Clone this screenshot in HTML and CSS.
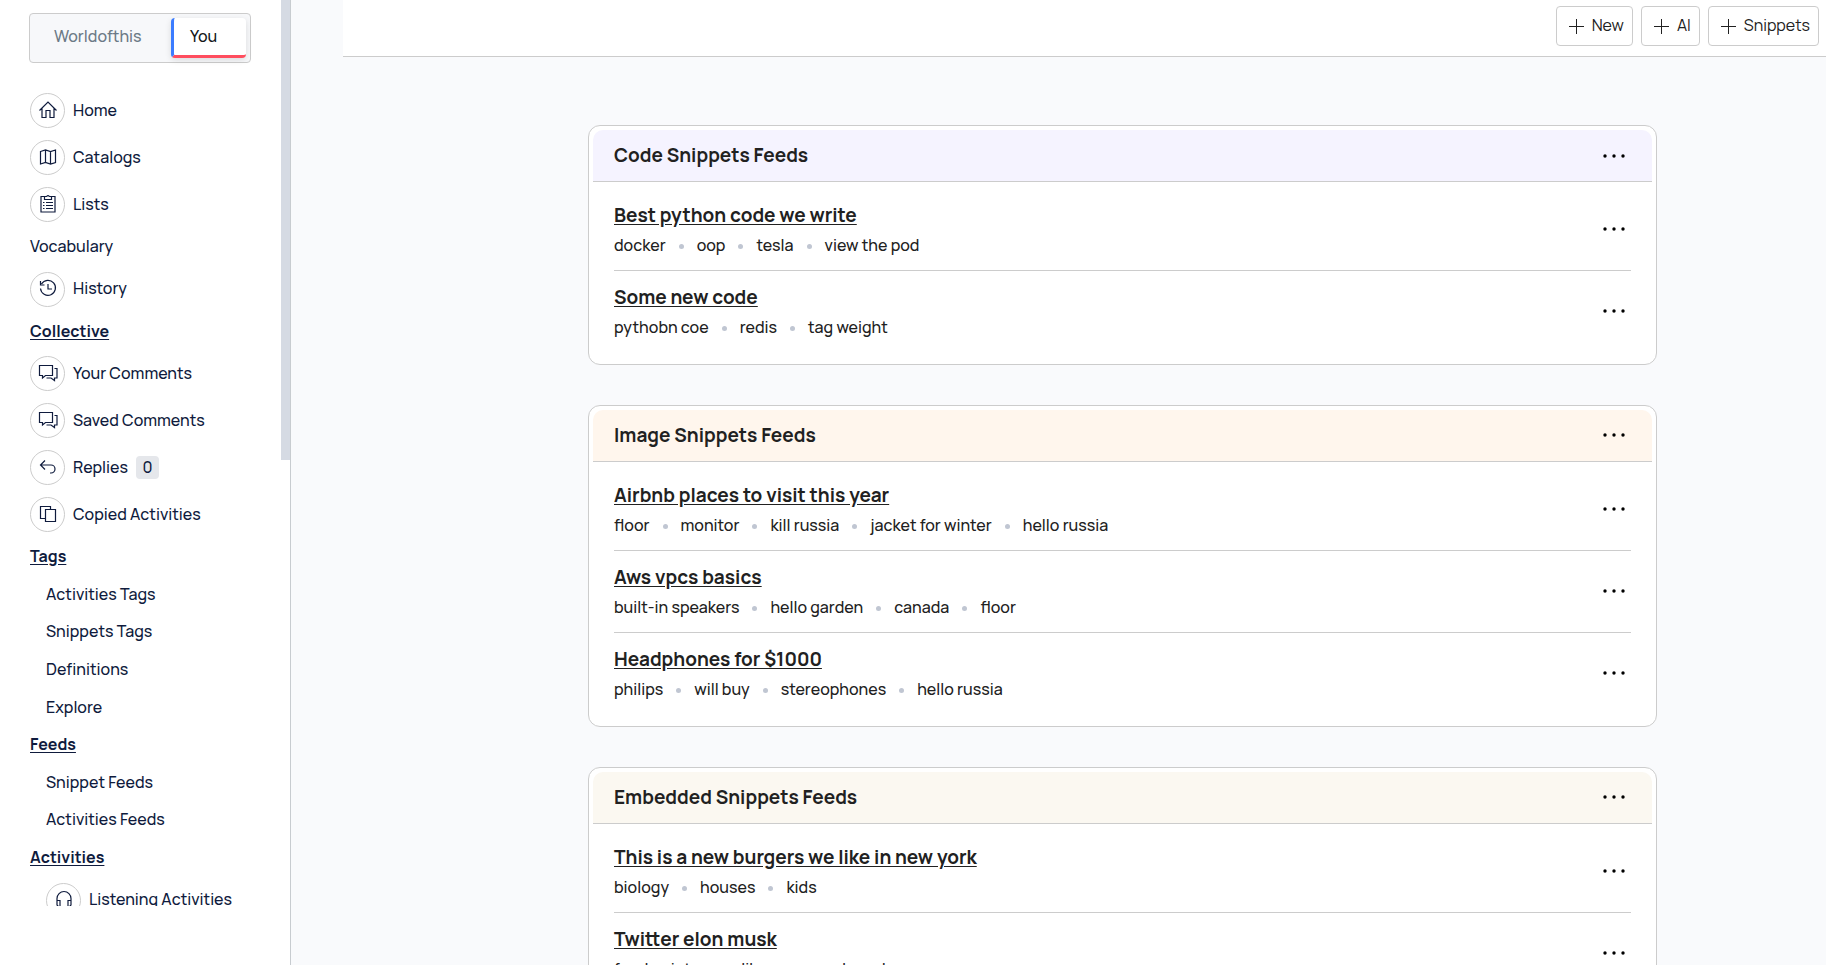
FILE: index.html
```html
<!DOCTYPE html>
<html lang="en">

<head>
    <meta charset="UTF-8">
    <meta name="viewport" content="width=device-width, initial-scale=1.0">
    <title>Snippet Feeds</title>
    <link rel="stylesheet" href="styles.css">
</head>

<body>
    <!-- shared icons -->
    <svg class="icon-defs" width="0" height="0" aria-hidden="true">
        <symbol id="icon-home" viewBox="0 0 18 18">
            <path d="M.5 9.5 9 1l8.500 8.500M3 7.500v9h4v-7h4v7h4v-9" />
        </symbol>
        <symbol id="icon-map" viewBox="0 0 18 18">
            <path d="M1.500 3.500 6.500 2l5 1.500 5-1.500v12.500l-5 1.500-5-1.500-5 1.500zM6.500 2v12.500M11.500 3.500V16" />
        </symbol>
        <symbol id="icon-list" viewBox="0 0 18 18">
            <path d="M5.500 1.500H2v15.500h14V1.500h-3.500M5.500 1.500h2L9 .500l1.500 1h2v3h-7zM4 7.500h1.500M7 7.500h7M4 10.500h1.500M7 10.500h7M4 13.500h1.500M7 13.500h7" />
        </symbol>
        <symbol id="icon-history" viewBox="0 0 18 18">
            <path d="M2.500 5A7.500 7.500 0 1 1 1.500 9.500M1.500 2v4h4M9 5v5h4" />
        </symbol>
        <symbol id="icon-comments" viewBox="0 0 20 18">
            <path d="M1.500 1.500h13v10H7.500L4.500 14v-2.500h-3zM16.500 4.500h2.500v9.500H16.500v2.500L13 14H8.500" />
        </symbol>
        <symbol id="icon-reply" viewBox="0 0 18 18">
            <path d="M6 2.500 1.500 7 6 11.500M1.500 7H12a4 4 0 0 1 0 8h-1" />
        </symbol>
        <symbol id="icon-copy" viewBox="0 0 18 18">
            <path d="M6 13.500H1.500v-12h10V4M6.500 4.500h10v12h-10z" />
        </symbol>
        <symbol id="icon-headphones" viewBox="0 0 18 18">
            <path d="M2 12V8.500a7 7 0 0 1 14 0V12M2 10.500h3v6H3.500L2 15zM16 10.500h-3v6h1.500L16 15z" />
        </symbol>
        <symbol id="icon-plus" viewBox="0 0 15 15">
            <path d="M7.500 0v15M0 7.500h15" />
        </symbol>
        <symbol id="icon-dots" viewBox="0 0 22 4">
            <circle cx="2" cy="2" r="1.700" />
            <circle cx="11" cy="2" r="1.700" />
            <circle cx="20" cy="2" r="1.700" />
        </symbol>
    </svg>

    <aside class="sidebar">
        <div class="sidebar-scroll">
            <div class="switcher">
                <button type="button" class="switch-btn">Worldofthis</button>
                <button type="button" class="switch-btn active">You</button>
            </div>

            <nav class="menu">
                <a href="#" class="menu-item"><span class="circle"><svg class="icon"><use href="#icon-home" /></svg></span>Home</a>
                <a href="#" class="menu-item"><span class="circle"><svg class="icon"><use href="#icon-map" /></svg></span>Catalogs</a>
                <a href="#" class="menu-item"><span class="circle"><svg class="icon"><use href="#icon-list" /></svg></span>Lists</a>
                <a href="#" class="menu-item">Vocabulary</a>
                <a href="#" class="menu-item"><span class="circle"><svg class="icon"><use href="#icon-history" /></svg></span>History</a>
                <a href="#" class="menu-item heading">Collective</a>
                <a href="#" class="menu-item"><span class="circle"><svg class="icon wide"><use href="#icon-comments" /></svg></span>Your Comments</a>
                <a href="#" class="menu-item"><span class="circle"><svg class="icon wide"><use href="#icon-comments" /></svg></span>Saved Comments</a>
                <a href="#" class="menu-item"><span class="circle"><svg class="icon"><use href="#icon-reply" /></svg></span>Replies <span class="count">0</span></a>
                <a href="#" class="menu-item"><span class="circle"><svg class="icon"><use href="#icon-copy" /></svg></span>Copied Activities</a>
                <a href="#" class="menu-item heading">Tags</a>
                <a href="#" class="menu-item sub">Activities Tags</a>
                <a href="#" class="menu-item sub">Snippets Tags</a>
                <a href="#" class="menu-item sub">Definitions</a>
                <a href="#" class="menu-item sub">Explore</a>
                <a href="#" class="menu-item heading">Feeds</a>
                <a href="#" class="menu-item sub">Snippet Feeds</a>
                <a href="#" class="menu-item sub">Activities Feeds</a>
                <a href="#" class="menu-item heading">Activities</a>
                <a href="#" class="menu-item sub"><span class="circle"><svg class="icon"><use href="#icon-headphones" /></svg></span>Listening Activities</a>
            </nav>
        </div>
        <div class="scroll-thumb"></div>
    </aside>

    <div class="page">
        <header class="topbar">
            <button type="button" class="add-btn"><svg class="plus"><use href="#icon-plus" /></svg>New</button>
            <button type="button" class="add-btn"><svg class="plus"><use href="#icon-plus" /></svg>AI</button>
            <button type="button" class="add-btn"><svg class="plus"><use href="#icon-plus" /></svg>Snippets</button>
        </header>

        <main class="feeds">
            <section class="card">
                <div class="card-header code">
                    <h2>Code Snippets Feeds</h2>
                    <button type="button" class="more" aria-label="More"><svg><use href="#icon-dots" /></svg></button>
                </div>
                <div class="card-body">
                    <div class="feed">
                        <div>
                            <a href="#" class="feed-title">Best python code we write</a>
                            <ul class="tags"><li>docker</li><li>oop</li><li>tesla</li><li>view the pod</li></ul>
                        </div>
                        <button type="button" class="more" aria-label="More"><svg><use href="#icon-dots" /></svg></button>
                    </div>
                    <div class="feed">
                        <div>
                            <a href="#" class="feed-title">Some new code</a>
                            <ul class="tags"><li>pythobn coe</li><li>redis</li><li>tag weight</li></ul>
                        </div>
                        <button type="button" class="more" aria-label="More"><svg><use href="#icon-dots" /></svg></button>
                    </div>
                </div>
            </section>

            <section class="card">
                <div class="card-header image">
                    <h2>Image Snippets Feeds</h2>
                    <button type="button" class="more" aria-label="More"><svg><use href="#icon-dots" /></svg></button>
                </div>
                <div class="card-body">
                    <div class="feed">
                        <div>
                            <a href="#" class="feed-title">Airbnb places to visit this year</a>
                            <ul class="tags"><li>floor</li><li>monitor</li><li>kill russia</li><li>jacket for winter</li><li>hello russia</li></ul>
                        </div>
                        <button type="button" class="more" aria-label="More"><svg><use href="#icon-dots" /></svg></button>
                    </div>
                    <div class="feed">
                        <div>
                            <a href="#" class="feed-title">Aws vpcs basics</a>
                            <ul class="tags"><li>built-in speakers</li><li>hello garden</li><li>canada</li><li>floor</li></ul>
                        </div>
                        <button type="button" class="more" aria-label="More"><svg><use href="#icon-dots" /></svg></button>
                    </div>
                    <div class="feed">
                        <div>
                            <a href="#" class="feed-title">Headphones for $1000</a>
                            <ul class="tags"><li>philips</li><li>will buy</li><li>stereophones</li><li>hello russia</li></ul>
                        </div>
                        <button type="button" class="more" aria-label="More"><svg><use href="#icon-dots" /></svg></button>
                    </div>
                </div>
            </section>

            <section class="card">
                <div class="card-header embedded">
                    <h2>Embedded Snippets Feeds</h2>
                    <button type="button" class="more" aria-label="More"><svg><use href="#icon-dots" /></svg></button>
                </div>
                <div class="card-body">
                    <div class="feed">
                        <div>
                            <a href="#" class="feed-title">This is a new burgers we like in new york</a>
                            <ul class="tags"><li>biology</li><li>houses</li><li>kids</li></ul>
                        </div>
                        <button type="button" class="more" aria-label="More"><svg><use href="#icon-dots" /></svg></button>
                    </div>
                    <div class="feed">
                        <div>
                            <a href="#" class="feed-title">Twitter elon musk</a>
                            <ul class="tags"><li>food point</li><li>unlike</li><li>some brand</li></ul>
                        </div>
                        <button type="button" class="more" aria-label="More"><svg><use href="#icon-dots" /></svg></button>
                    </div>
                </div>
            </section>
        </main>
    </div>
</body>

</html>
```
FILE: styles.css
```css
* {
    box-sizing: border-box;
}

body {
    margin: 0;
    font-family: Manrope, Inter, sans-serif;
    font-size: 16px;
    font-weight: 500;
    line-height: 1.6;
    color: #212121;
    background-color: #f9fafc;
    display: flex;
    height: 100vh;
    overflow: hidden;
}

button {
    font: inherit;
    color: inherit;
    cursor: pointer;
}

a {
    color: inherit;
}

.icon-defs {
    position: absolute;
}

/* sidebar */
.sidebar {
    position: relative;
    flex: 0 0 291px;
    background-color: #fff;
    border-right: 1px solid #c8ccd0;
    padding-bottom: 59px;
    color: #0f1b3d;
}

.sidebar-scroll {
    height: 100%;
    overflow: hidden;
    padding: 13px 30px 0 29px;
}

.scroll-thumb {
    position: absolute;
    top: 0;
    right: 0;
    width: 9px;
    height: 460px;
    background-color: #d5dae3;
}

.switcher {
    display: flex;
    width: 222px;
    height: 50px;
    padding: 4px;
    background-color: #f7f8fa;
    border: 1px solid #ccc;
    border-radius: 4px;
}

.switch-btn {
    flex: 1 1 auto;
    padding: 0 20px 3px;
    border: none;
    border-radius: 4px;
    background: none;
    color: #6c7a86;
    text-align: left;
}

.switch-btn.active {
    flex: 0 0 75px;
    padding: 0 16px;
    background-color: #fff;
    border-left: 3px solid #3b7cff;
    border-bottom: 3px solid #ff4d5e;
    color: #14171a;
    box-shadow: 0 2px 6px rgba(0, 0, 0, 0.12);
}

.menu {
    display: flex;
    flex-direction: column;
    gap: 12px;
    padding: 30px 0 0 1px;
}

.menu-item {
    display: flex;
    align-items: center;
    gap: 8px;
    white-space: nowrap;
    text-decoration: none;
}

.menu-item.heading {
    font-weight: 700;
    text-decoration: underline;
    text-underline-offset: 2px;
}

.menu-item.sub {
    padding-left: 16px;
}

.circle {
    display: flex;
    align-items: center;
    justify-content: center;
    width: 35px;
    height: 35px;
    padding-bottom: 2px;
    border: 1px solid #ccc;
    border-radius: 50%;
}

.icon {
    width: 18px;
    height: 18px;
    fill: none;
    stroke: #0f1b3d;
    stroke-width: 1.2;
}

.icon.wide {
    width: 20px;
}

.count {
    width: 23px;
    line-height: 23px;
    background-color: #e5e7eb;
    border-radius: 4px;
    text-align: center;
    font-size: 16px;
}

/* page */
.page {
    flex: 1;
    min-width: 0;
}

.topbar {
    display: flex;
    justify-content: flex-end;
    gap: 8px;
    margin-left: 52px;
    padding: 6px 7px 10px;
    background-color: #fff;
    border-bottom: 1px solid #ccc;
}

.add-btn {
    display: flex;
    align-items: center;
    gap: 8px;
    height: 40px;
    padding: 0 8px 0 12px;
    background-color: #fff;
    border: 1px solid #ccc;
    border-radius: 4px;
    font-weight: 400;
}

.plus {
    width: 15px;
    height: 15px;
    stroke: #212121;
}

.feeds {
    display: flex;
    flex-direction: column;
    gap: 40px;
    padding: 68px 169px 0 297px;
}

.card {
    padding: 4px;
    background-color: #fff;
    border: 1px solid #ccc;
    border-radius: 12px;
}

.card-header {
    display: flex;
    align-items: center;
    justify-content: space-between;
    height: 52px;
    padding: 0 21px;
    border-bottom: 1px solid #ccc;
    border-radius: 10px 10px 0 0;
}

.card-header.code {
    background-color: #f5f3ff;
}

.card-header.image {
    background-color: #fff6ed;
}

.card-header.embedded {
    background-color: #fbf8f1;
}

.card-header h2 {
    margin: 0;
    font-size: 19px;
    font-weight: 700;
}

.card-body {
    padding: 7px 21px 8px;
}

.feed {
    display: flex;
    align-items: center;
    justify-content: space-between;
    padding: 11px 0;
    border-bottom: 1px solid #ccc;
}

.feed:last-child {
    border-bottom: none;
}

.feed-title {
    font-size: 19px;
    font-weight: 700;
    text-underline-offset: 2px;
}

.tags {
    display: flex;
    margin: 0;
    padding: 3px 0 0;
    list-style: none;
}

.tags li {
    display: flex;
    align-items: center;
}

.tags li + li::before {
    content: "";
    width: 5px;
    height: 5px;
    margin: 0 13px;
    border-radius: 50%;
    background-color: #c0c6d2;
}

.more {
    display: flex;
    padding: 6px;
    background: none;
    border: none;
}

.more svg {
    width: 22px;
    height: 4px;
}
```
